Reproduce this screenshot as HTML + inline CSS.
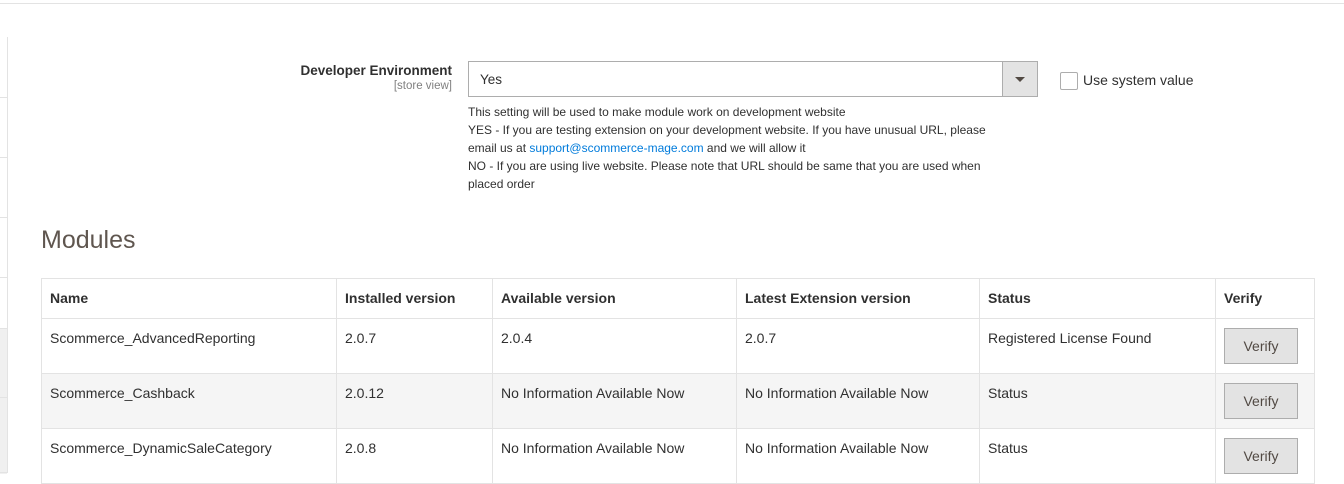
<!DOCTYPE html>
<html><head><style>
body{margin:0;width:1344px;height:482px;overflow:hidden;background:#fff;font-family:"Liberation Sans",sans-serif;color:#303030;position:relative}
.topline{position:absolute;left:0;top:3px;width:1344px;height:1px;background:#e3e3e3}
.side{position:absolute;left:0;top:37px;width:7px;height:436px;border-right:1px solid #e3e3e3}
.side div{position:absolute;left:0;width:7px;border-top:1px solid #e3e3e3}
.lbl{position:absolute;right:892px;top:63px;text-align:right;font-weight:bold;font-size:13.5px;color:#303030}
.lbl small{display:block;font-weight:normal;font-size:11.5px;color:#808080;margin-top:2px}
.sel{position:absolute;left:468px;top:61px;width:568px;height:34px;border:1px solid #adadad;font-size:13.5px}
.sel span{position:absolute;left:11px;top:10px}
.sel .arr{position:absolute;right:0;top:0;width:34px;height:34px;background:#e3e3e3;border-left:1px solid #adadad}
.sel .arr:after{content:"";position:absolute;left:12px;top:15px;border-left:5px solid transparent;border-right:5px solid transparent;border-top:5px solid #514943}
.chk{position:absolute;left:1060px;top:72px;width:16px;height:16px;border:1px solid #adadad;border-radius:2px}
.chkl{position:absolute;left:1083px;top:72px;font-size:14px;color:#303030}
.note{position:absolute;left:468px;top:103px;width:568px;font-size:12px;line-height:18px;color:#303030}
.note a{color:#007bdb;text-decoration:none}
h2{position:absolute;left:41px;top:226px;margin:0;font-weight:normal;font-size:25px;color:#5f564f}
table{position:absolute;left:41px;top:278px;border-collapse:collapse;width:1274px;font-size:14px}
td,th{border:1px solid #e3e3e3;text-align:left;vertical-align:top;padding:11px 8px 0}
th{height:28px;font-weight:bold}
td{height:43px}
tr.g td{background:#f5f5f5}
.btn{display:inline-block;width:72px;height:34px;line-height:34px;text-align:center;background:#e3e3e3;border:1px solid #adadad;color:#514943;margin-top:-2px}
</style></head><body>
<div class="topline"></div>
<div class="side"><div style="top:60px"></div><div style="top:120px"></div><div style="top:180px"></div><div style="top:240px"></div><div style="top:291px;height:145px;background:#f0f0f0"></div><div style="top:360px"></div><div style="top:435px"></div></div>
<div class="lbl">Developer Environment<small>[store view]</small></div>
<div class="sel"><span>Yes</span><div class="arr"></div></div>
<div class="chk"></div><div class="chkl">Use system value</div>
<div class="note">This setting will be used to make module work on development website<br>YES - If you are testing extension on your development website. If you have unusual URL, please<br>email us at <a>support@scommerce-mage.com</a> and we will allow it<br>NO - If you are using live website. Please note that URL should be same that you are used when<br>placed order</div>
<h2>Modules</h2>
<table>
<tr><th style="width:278px">Name</th><th style="width:139px">Installed version</th><th style="width:227px">Available version</th><th style="width:226px">Latest Extension version</th><th style="width:219px">Status</th><th>Verify</th></tr>
<tr><td>Scommerce_AdvancedReporting</td><td>2.0.7</td><td>2.0.4</td><td>2.0.7</td><td>Registered License Found</td><td><span class="btn">Verify</span></td></tr>
<tr class="g"><td>Scommerce_Cashback</td><td>2.0.12</td><td>No Information Available Now</td><td>No Information Available Now</td><td>Status</td><td><span class="btn">Verify</span></td></tr>
<tr><td>Scommerce_DynamicSaleCategory</td><td>2.0.8</td><td>No Information Available Now</td><td>No Information Available Now</td><td>Status</td><td><span class="btn">Verify</span></td></tr>
</table>
</body></html>
